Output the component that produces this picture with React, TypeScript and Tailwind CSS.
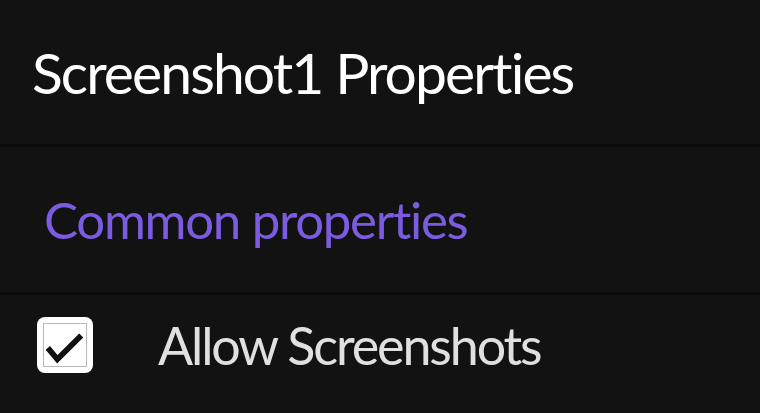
import React, { useState } from "react";

const App: React.FC = () => {
    const [allowScreenshots, setAllowScreenshots] = useState(true);

    return (
        <div
            className="w-[760px] h-[413px] overflow-hidden bg-[#121212] [font-variant-ligatures:none]"
            style={{ fontFamily: "Lato, 'Liberation Sans', sans-serif" }}
        >
            {/* Title */}
            <div className="h-[144px] flex items-center pl-[32px]">
                <h1 className="text-[57px] leading-none tracking-[-1.9px] text-white font-normal">Screenshot1 Properties</h1>
            </div>
            <div className="h-[3px] bg-[#0a0a0a]" />

            {/* Section header */}
            <div className="h-[145px] flex items-center pl-[44px]">
                <h2 className="text-[51px] leading-none tracking-[-1.3px] text-[#7b5ce0] font-normal">Common properties</h2>
            </div>
            <div className="h-[3px] bg-[#0a0a0a]" />

            {/* Allow Screenshots */}
            <div className="h-[100px] flex items-center pl-[37px]">
                <button
                    type="button"
                    onClick={() => setAllowScreenshots(!allowScreenshots)}
                    className="w-[56px] h-[56px] bg-white rounded-[8px] flex items-center justify-center"
                >
                    <span className="w-[44px] h-[44px] border border-[#b8b8b8] bg-white flex items-center justify-center">
                        {allowScreenshots && (
                            <svg width="44" height="44" viewBox="0 0 44 44">
                                <polyline
                                    points="4,25 14,37 39,12"
                                    fill="none"
                                    stroke="#111"
                                    strokeWidth="6"
                                />
                            </svg>
                        )}
                    </span>
                </button>
                <span className="ml-[65px] text-[52px] leading-none tracking-[-2.1px] text-[#e0e0e0]">Allow Screenshots</span>
            </div>
        </div>
    );
};

export default App;
